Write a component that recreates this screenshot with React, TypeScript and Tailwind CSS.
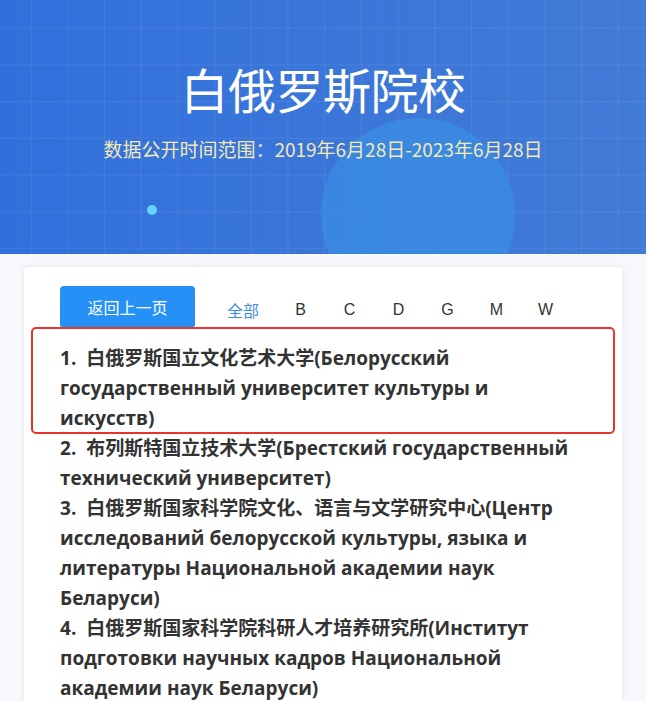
import React from "react";

const items: string[][] = [
  ["白俄罗斯国立文化艺术大学(Белорусский", "государственный университет культуры и", "искусств)"],
  ["布列斯特国立技术大学(Брестский государственный", "технический университет)"],
  [
    "白俄罗斯国家科学院文化、语言与文学研究中心(Центр",
    "исследований белорусской культуры, языка и",
    "литературы Национальной академии наук",
    "Беларуси)",
  ],
  [
    "白俄罗斯国家科学院科研人才培养研究所(Институт",
    "подготовки научных кадров Национальной",
    "академии наук Беларуси)",
  ],
];

const tabs = ["全部", "B", "C", "D", "G", "M", "W"];

export default function App() {
  return (
    <div className="w-[646px] h-[701px] overflow-hidden bg-[#f6f8fb] font-['Noto_Sans_CJK_SC',sans-serif]">
      {/* Banner */}
      <div className="relative h-[254px] overflow-hidden bg-gradient-to-r from-[#316fdc] via-[#3a76d9] to-[#427bd6]">
        <div className="absolute inset-0 bg-[linear-gradient(rgba(255,255,255,0.07)_1px,transparent_1px),linear-gradient(90deg,rgba(255,255,255,0.07)_1px,transparent_1px)] bg-[size:36.7px_36.7px] bg-[position:-6px_-9px]" />
        <div className="absolute left-[321px] top-[118px] w-[194px] h-[194px] rounded-full bg-[#3a8ce2] opacity-80" />
        <div className="absolute left-[147px] top-[205px] w-[10px] h-[10px] rounded-full bg-[#62d4ff]" />
        <div className="relative flex flex-col items-center pt-[56px]">
          <h1 className="text-[48px] leading-[64px] font-normal text-white tracking-[-0.5px]">白俄罗斯院校</h1>
          <p className="mt-[16px] text-[19px] leading-[26px] text-[#f2e8b6]">数据公开时间范围：2019年6月28日-2023年6月28日</p>
        </div>
      </div>

      {/* Card */}
      <div className="mx-[24px] mt-[13px] w-[598px] h-[460px] rounded-[4px] bg-white shadow-[0_0_6px_rgba(0,0,0,0.08)] pl-[36px] pr-[20px] pt-[19px]">
        <div className="flex items-center">
          <button className="w-[135px] h-[41px] rounded-t-[4px] rounded-b-[2px] bg-[#2591f6] text-white text-[16px] leading-none">
            返回上一页
          </button>
          <div className="ml-[15px] flex items-center pt-[7px]">
            {tabs.map((t, i) => (
              <span
                key={t}
                className={
                  i === 0
                    ? "w-[66px] text-center text-[16px] text-[#3a8ee6] font-['Noto_Sans_CJK_SC',sans-serif]"
                    : "w-[49px] text-center text-[16px] text-[#333] font-['Liberation_Sans',sans-serif]"
                }
              >
                {t}
              </span>
            ))}
          </div>
        </div>

        <div className="relative mt-[16px] whitespace-nowrap font-['Open_Sans','Noto_Sans_CJK_SC',sans-serif] font-bold text-[19px] leading-[30px] text-[#333]">
          <div className="pointer-events-none absolute left-[-29px] right-[-13px] top-[-16px] h-[107px] rounded-[5px] border-2 border-[#e8342b]" />
          {items.map((lines, i) => (
            <div key={i}>
              {lines.map((l, j) => (
                <div key={j}>
                  {j === 0 ? <>{i + 1}.&nbsp; </> : null}
                  {l}
                </div>
              ))}
            </div>
          ))}
        </div>
      </div>
    </div>
  );
}
